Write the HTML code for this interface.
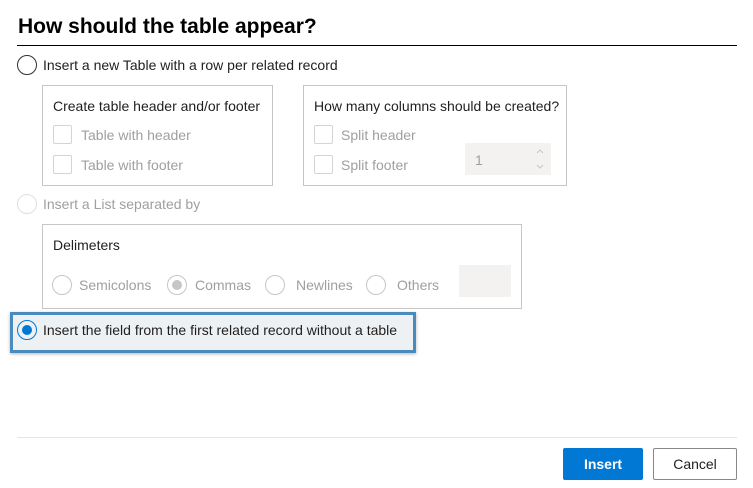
<!DOCTYPE html>
<html><head><style>
body{margin:0;width:753px;height:488px;background:#fff;font-family:"Segoe UI","Liberation Sans",sans-serif;position:relative;overflow:hidden;color:#201f1e}
.a{position:absolute;white-space:nowrap}
.t{font-size:14px;margin-top:1px}
.g{color:#a19f9d}
.box{position:absolute;border:1px solid #c8c6c4;box-sizing:border-box}
.cb{position:absolute;width:19px;height:19px;border:1px solid #d6d4d2;box-sizing:border-box;border-radius:2px}
.rd{position:absolute;width:20px;height:20px;border-radius:50%;box-sizing:border-box;border:1px solid #c8c6c4}
</style></head><body>
<div class="a" style="left:18px;top:15px;font-size:21px;font-weight:600;color:#000">How should the table appear?</div>
<div class="a" style="left:17px;top:45px;width:720px;height:1px;background:#000"></div>

<div class="rd" style="left:17px;top:55px;border-color:#323130"></div>
<div class="a t" style="left:43px;top:56px">Insert a new Table with a row per related record</div>

<div class="box" style="left:42px;top:85px;width:231px;height:101px"></div>
<div class="a t" style="left:53px;top:97px">Create table header and/or footer</div>
<div class="cb" style="left:53px;top:125px"></div><div class="a t g" style="left:81px;top:126px">Table with header</div>
<div class="cb" style="left:53px;top:155px"></div><div class="a t g" style="left:81px;top:156px">Table with footer</div>

<div class="box" style="left:303px;top:85px;width:264px;height:101px"></div>
<div class="a t" style="left:314px;top:97px">How many columns should be created?</div>
<div class="cb" style="left:314px;top:125px"></div><div class="a t g" style="left:341px;top:126px">Split header</div>
<div class="cb" style="left:314px;top:155px"></div><div class="a t g" style="left:341px;top:156px">Split footer</div>
<div class="a" style="left:465px;top:143px;width:86px;height:32px;background:#f3f2f1"></div>
<div class="a t g" style="left:475px;top:151px">1</div>
<svg class="a" style="left:534px;top:147px" width="12" height="24"><path d="M3 6l3-3 3 3M3 18l3 3 3-3" stroke="#c8c6c4" fill="none"/></svg>

<div class="rd" style="left:17px;top:194px;border-color:#e1dfdd"></div>
<div class="a t g" style="left:43px;top:195px">Insert a List separated by</div>

<div class="box" style="left:42px;top:224px;width:480px;height:85px"></div>
<div class="a t" style="left:53px;top:236px">Delimeters</div>
<div class="rd" style="left:52px;top:275px"></div><div class="a t g" style="left:79px;top:276px">Semicolons</div>
<div class="rd" style="left:167px;top:275px"><div style="position:absolute;left:4px;top:4px;width:10px;height:10px;border-radius:50%;background:#c8c6c4"></div></div><div class="a t g" style="left:195px;top:276px">Commas</div>
<div class="rd" style="left:265px;top:275px"></div><div class="a t g" style="left:296px;top:276px">Newlines</div>
<div class="rd" style="left:366px;top:275px"></div><div class="a t g" style="left:397px;top:276px">Others</div>
<div class="a" style="left:459px;top:265px;width:52px;height:32px;background:#f3f2f1"></div>

<div class="a" style="left:10px;top:312px;width:406px;height:41px;box-sizing:border-box;border:3px solid #4a8bbd;background:#eef1f4;box-shadow:0 1px 3px rgba(0,0,0,.3)"></div>
<div class="rd" style="left:17px;top:320px;border-color:#0078d4"><div style="position:absolute;left:4px;top:4px;width:10px;height:10px;border-radius:50%;background:#0078d4"></div></div>
<div class="a t" style="left:43px;top:321px">Insert the field from the first related record without a table</div>

<div class="a" style="left:17px;top:437px;width:720px;height:1px;background:#dfe6ee"></div>
<div class="a" style="left:563px;top:448px;width:80px;height:32px;background:#0078d4;border-radius:2px;color:#fff;font-size:14px;font-weight:600;text-align:center;line-height:32px">Insert</div>
<div class="a" style="left:653px;top:448px;width:84px;height:32px;box-sizing:border-box;border:1px solid #8a8886;border-radius:2px;font-size:14px;text-align:center;line-height:30px">Cancel</div>
</body></html>
